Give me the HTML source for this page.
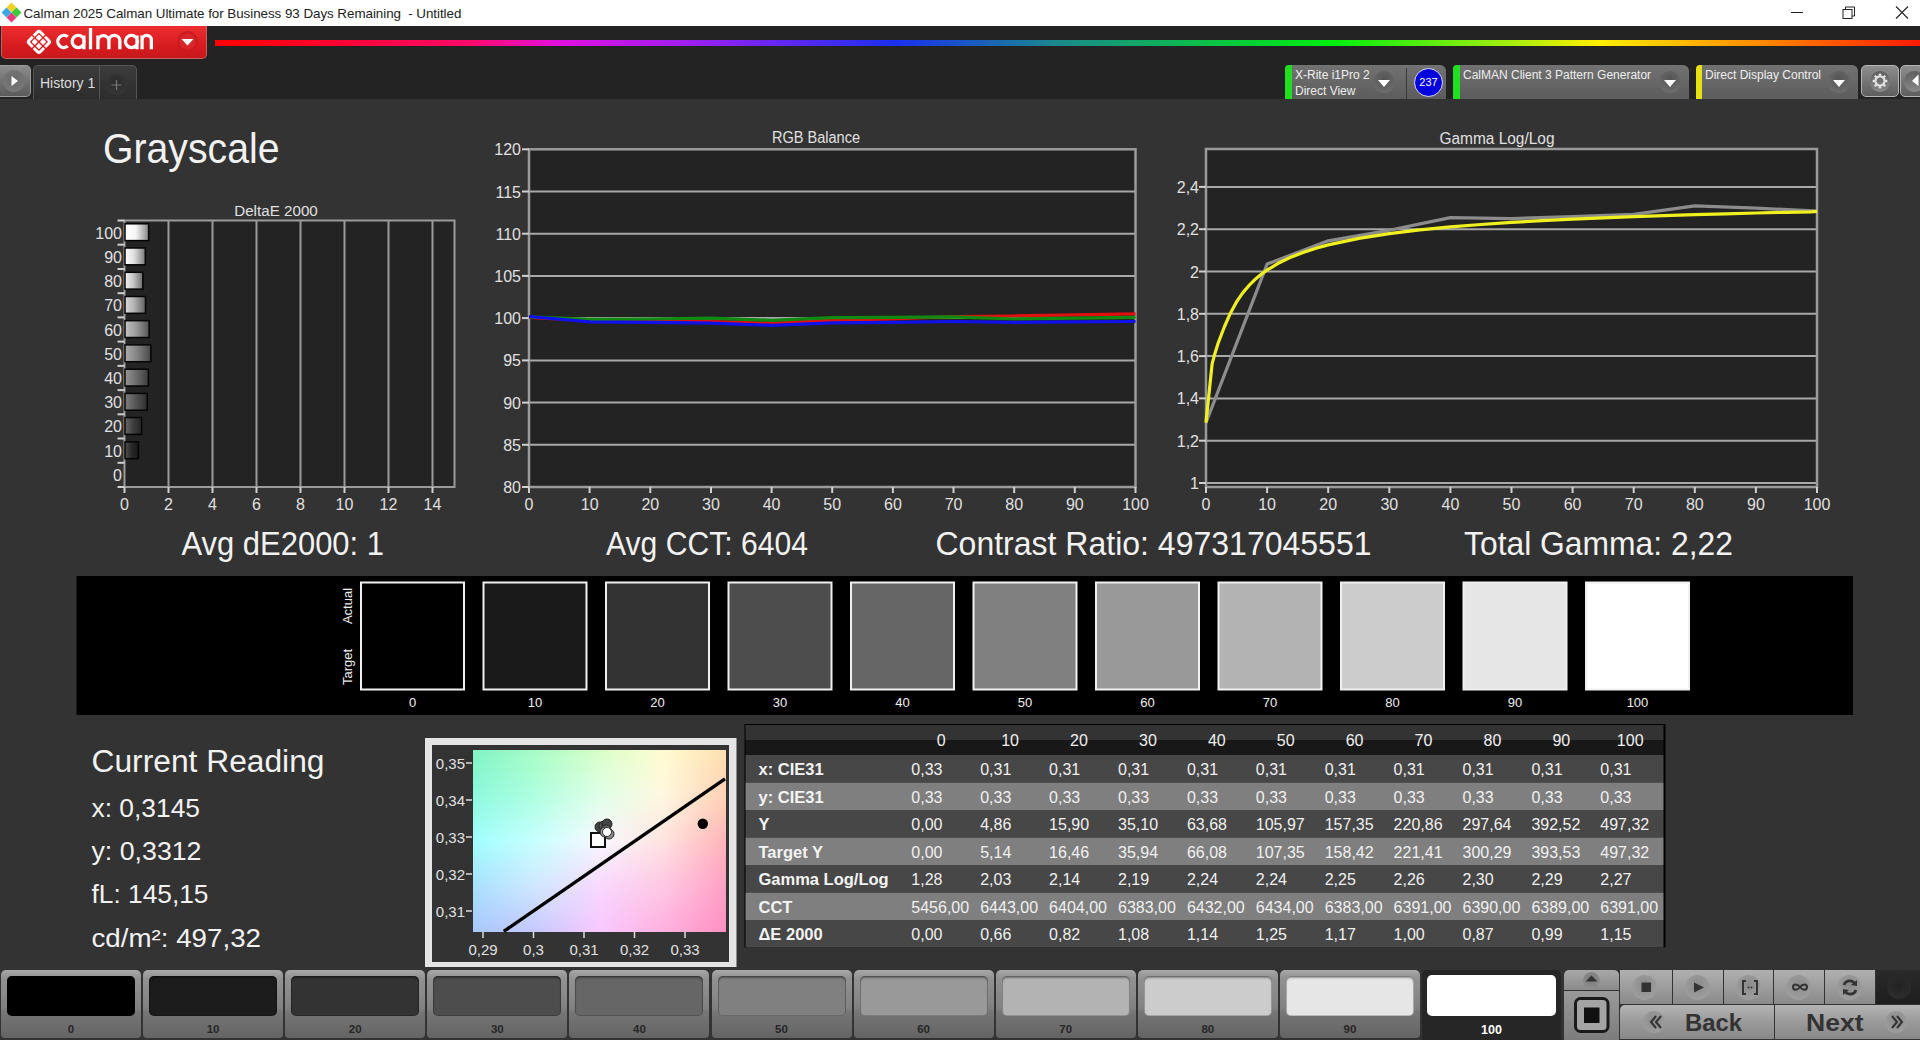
<!DOCTYPE html>
<html><head><meta charset="utf-8"><title>Calman</title>
<style>
*{margin:0;padding:0;box-sizing:border-box}
html,body{width:1920px;height:1040px;overflow:hidden;background:#333;font-family:"Liberation Sans",sans-serif}
.a{position:absolute}
#titlebar{left:0;top:0;width:1920px;height:26px;background:#fff}
#topband{left:0;top:26px;width:1920px;height:73px;background:#232323}
#content{left:0;top:99px;width:1920px;height:871px;background:#333}
#bottom{left:0;top:970px;width:1920px;height:70px;background:#333}
.ttl{left:23.5px;top:5.5px;font-size:13.4px;color:#222;white-space:nowrap;letter-spacing:-0.05px}
.logo{left:1px;top:26px;width:206px;height:33px;border-radius:0 0 5px 5px;background:linear-gradient(#ec2e30,#d81c20 60%,#c8181c);border:1px solid #c56060;border-top:none}
.rainbow{left:215px;top:40px;width:1705px;height:5.5px;background:linear-gradient(90deg,#ff0000 0px,#ff0a6a 255px,#e010e0 345px,#9a20f0 480px,#1a30f0 680px,#1a8a8a 845px,#00ee10 1115px,#a0ee10 1290px,#ffee00 1385px,#ff8a00 1545px,#ff1a00 1705px)}
.dev{top:65px;height:34px;border-radius:4px 6px 0 0;background:linear-gradient(#727272,#5c5c5c);overflow:hidden}
.dev .strip{position:absolute;left:0;top:0;bottom:0;width:7px;background:#1fe01f;border-radius:3px 0 0 0}
.dev .t{position:absolute;color:#eee;font-size:12px;white-space:nowrap}
.dd{position:absolute;width:22px;height:22px;border-radius:50%;background:radial-gradient(circle at 50% 35%,#555,#6a6a6a 70%,#777)}
.dd:after{content:"";position:absolute;left:5px;top:9px;border-left:6px solid transparent;border-right:6px solid transparent;border-top:7px solid #fff}
.btm{top:970px;height:68px;width:140px;border-radius:5px 5px 4px 4px;background:linear-gradient(#a8a8a8,#929292 12%,#828282 55%,#767676 62%,#646464)}
.btm .sw{position:absolute;left:6px;top:5.5px;width:128px;height:40.5px;border-radius:5px;box-shadow:inset 0 2px 2px rgba(0,0,0,0.35),inset 0 0 0 1px rgba(0,0,0,0.18)}
.btm .lb{position:absolute;left:0;width:140px;top:53px;text-align:center;font-size:11.5px;font-weight:bold;color:#262626}
.tb{top:970px;height:33.5px;width:50px;background:linear-gradient(#b0b0b0,#8a8a8a);border-right:1px solid #333}
.tb .c{position:absolute;left:12px;top:5px;width:25px;height:25px;border-radius:50%;background:radial-gradient(circle at 50% 40%,#8a8a8a,#9a9a9a 60%,#a4a4a4)}
</style></head><body>
<div class="a" id="titlebar"></div>
<svg class="a" style="left:1px;top:3px" width="22" height="22" viewBox="0 0 22 22">
<rect x="7" y="1" width="7" height="7" transform="rotate(45 10.5 4.5)" fill="#f5d020"/>
<rect x="2" y="6" width="7" height="7" transform="rotate(45 5.5 9.5)" fill="#3aa8e8"/>
<rect x="12" y="6" width="7" height="7" transform="rotate(45 15.5 9.5)" fill="#3cc83c"/>
<rect x="7" y="11" width="7" height="7" transform="rotate(45 10.5 14.5)" fill="#e83a7a"/>
</svg>
<div class="a ttl">Calman 2025 Calman Ultimate for Business 93 Days Remaining &nbsp;- Untitled</div>
<svg class="a" style="left:1785px;top:0" width="135" height="26">
<line x1="6" y1="12.5" x2="18" y2="12.5" stroke="#222" stroke-width="1"/>
<rect x="58" y="9.5" width="9" height="9" fill="none" stroke="#222" stroke-width="1"/>
<path d="M60.5,9.5 V7 H69.5 V16 H67" fill="none" stroke="#222" stroke-width="1"/>
<path d="M111,6.5 L123,18.5 M123,6.5 L111,18.5" stroke="#222" stroke-width="1.1"/>
</svg>
<div class="a" id="topband"></div>
<div class="a" id="content"></div>
<div class="a" id="bottom"></div>
<svg id="main" width="1920" height="1040" viewBox="0 0 1920 1040" style="position:absolute;left:0;top:0;font-family:"Liberation Sans", sans-serif"><defs><linearGradient id="cr0" x1="0" x2="1" y1="0" y2="0"><stop offset="0.0" stop-color="rgb(129,244,197)"/><stop offset="0.25" stop-color="rgb(168,252,197)"/><stop offset="0.5" stop-color="rgb(216,255,201)"/><stop offset="0.75" stop-color="rgb(255,252,209)"/><stop offset="1.0" stop-color="rgb(255,223,176)"/></linearGradient><linearGradient id="cr1" x1="0" x2="1" y1="0" y2="0"><stop offset="0.0" stop-color="rgb(130,245,199)"/><stop offset="0.25" stop-color="rgb(169,252,200)"/><stop offset="0.5" stop-color="rgb(217,255,204)"/><stop offset="0.75" stop-color="rgb(255,251,210)"/><stop offset="1.0" stop-color="rgb(255,222,177)"/></linearGradient><linearGradient id="cr2" x1="0" x2="1" y1="0" y2="0"><stop offset="0.0" stop-color="rgb(131,245,201)"/><stop offset="0.25" stop-color="rgb(170,253,202)"/><stop offset="0.5" stop-color="rgb(218,255,207)"/><stop offset="0.75" stop-color="rgb(255,251,211)"/><stop offset="1.0" stop-color="rgb(255,221,177)"/></linearGradient><linearGradient id="cr3" x1="0" x2="1" y1="0" y2="0"><stop offset="0.0" stop-color="rgb(132,245,203)"/><stop offset="0.25" stop-color="rgb(170,253,205)"/><stop offset="0.5" stop-color="rgb(218,255,210)"/><stop offset="0.75" stop-color="rgb(255,251,213)"/><stop offset="1.0" stop-color="rgb(255,219,177)"/></linearGradient><linearGradient id="cr4" x1="0" x2="1" y1="0" y2="0"><stop offset="0.0" stop-color="rgb(133,246,205)"/><stop offset="0.25" stop-color="rgb(171,253,207)"/><stop offset="0.5" stop-color="rgb(219,255,213)"/><stop offset="0.75" stop-color="rgb(255,250,214)"/><stop offset="1.0" stop-color="rgb(255,218,178)"/></linearGradient><linearGradient id="cr5" x1="0" x2="1" y1="0" y2="0"><stop offset="0.0" stop-color="rgb(134,246,207)"/><stop offset="0.25" stop-color="rgb(172,253,209)"/><stop offset="0.5" stop-color="rgb(220,255,215)"/><stop offset="0.75" stop-color="rgb(255,250,216)"/><stop offset="1.0" stop-color="rgb(255,216,178)"/></linearGradient><linearGradient id="cr6" x1="0" x2="1" y1="0" y2="0"><stop offset="0.0" stop-color="rgb(135,246,210)"/><stop offset="0.25" stop-color="rgb(173,254,212)"/><stop offset="0.5" stop-color="rgb(221,255,218)"/><stop offset="0.75" stop-color="rgb(255,250,217)"/><stop offset="1.0" stop-color="rgb(255,215,178)"/></linearGradient><linearGradient id="cr7" x1="0" x2="1" y1="0" y2="0"><stop offset="0.0" stop-color="rgb(136,247,212)"/><stop offset="0.25" stop-color="rgb(173,254,214)"/><stop offset="0.5" stop-color="rgb(221,255,221)"/><stop offset="0.75" stop-color="rgb(255,249,218)"/><stop offset="1.0" stop-color="rgb(255,214,179)"/></linearGradient><linearGradient id="cr8" x1="0" x2="1" y1="0" y2="0"><stop offset="0.0" stop-color="rgb(137,247,214)"/><stop offset="0.25" stop-color="rgb(174,254,217)"/><stop offset="0.5" stop-color="rgb(222,255,224)"/><stop offset="0.75" stop-color="rgb(255,249,220)"/><stop offset="1.0" stop-color="rgb(255,212,179)"/></linearGradient><linearGradient id="cr9" x1="0" x2="1" y1="0" y2="0"><stop offset="0.0" stop-color="rgb(138,247,216)"/><stop offset="0.25" stop-color="rgb(175,254,219)"/><stop offset="0.5" stop-color="rgb(223,255,226)"/><stop offset="0.75" stop-color="rgb(255,249,221)"/><stop offset="1.0" stop-color="rgb(255,211,179)"/></linearGradient><linearGradient id="cr10" x1="0" x2="1" y1="0" y2="0"><stop offset="0.0" stop-color="rgb(139,248,218)"/><stop offset="0.25" stop-color="rgb(175,255,222)"/><stop offset="0.5" stop-color="rgb(223,255,229)"/><stop offset="0.75" stop-color="rgb(255,248,223)"/><stop offset="1.0" stop-color="rgb(255,209,180)"/></linearGradient><linearGradient id="cr11" x1="0" x2="1" y1="0" y2="0"><stop offset="0.0" stop-color="rgb(140,248,220)"/><stop offset="0.25" stop-color="rgb(176,255,224)"/><stop offset="0.5" stop-color="rgb(224,255,232)"/><stop offset="0.75" stop-color="rgb(255,248,224)"/><stop offset="1.0" stop-color="rgb(255,208,180)"/></linearGradient><linearGradient id="cr12" x1="0" x2="1" y1="0" y2="0"><stop offset="0.0" stop-color="rgb(142,249,223)"/><stop offset="0.25" stop-color="rgb(178,255,227)"/><stop offset="0.5" stop-color="rgb(226,254,234)"/><stop offset="0.75" stop-color="rgb(255,246,224)"/><stop offset="1.0" stop-color="rgb(255,206,180)"/></linearGradient><linearGradient id="cr13" x1="0" x2="1" y1="0" y2="0"><stop offset="0.0" stop-color="rgb(143,249,226)"/><stop offset="0.25" stop-color="rgb(180,255,229)"/><stop offset="0.5" stop-color="rgb(228,254,236)"/><stop offset="0.75" stop-color="rgb(255,245,224)"/><stop offset="1.0" stop-color="rgb(255,203,181)"/></linearGradient><linearGradient id="cr14" x1="0" x2="1" y1="0" y2="0"><stop offset="0.0" stop-color="rgb(145,250,229)"/><stop offset="0.25" stop-color="rgb(182,255,232)"/><stop offset="0.5" stop-color="rgb(230,253,238)"/><stop offset="0.75" stop-color="rgb(255,243,224)"/><stop offset="1.0" stop-color="rgb(255,201,181)"/></linearGradient><linearGradient id="cr15" x1="0" x2="1" y1="0" y2="0"><stop offset="0.0" stop-color="rgb(147,250,232)"/><stop offset="0.25" stop-color="rgb(184,255,235)"/><stop offset="0.5" stop-color="rgb(232,253,240)"/><stop offset="0.75" stop-color="rgb(255,241,224)"/><stop offset="1.0" stop-color="rgb(255,198,181)"/></linearGradient><linearGradient id="cr16" x1="0" x2="1" y1="0" y2="0"><stop offset="0.0" stop-color="rgb(149,251,235)"/><stop offset="0.25" stop-color="rgb(186,255,237)"/><stop offset="0.5" stop-color="rgb(234,252,242)"/><stop offset="0.75" stop-color="rgb(255,239,224)"/><stop offset="1.0" stop-color="rgb(255,196,182)"/></linearGradient><linearGradient id="cr17" x1="0" x2="1" y1="0" y2="0"><stop offset="0.0" stop-color="rgb(150,252,238)"/><stop offset="0.25" stop-color="rgb(189,255,240)"/><stop offset="0.5" stop-color="rgb(237,251,244)"/><stop offset="0.75" stop-color="rgb(255,238,224)"/><stop offset="1.0" stop-color="rgb(255,193,182)"/></linearGradient><linearGradient id="cr18" x1="0" x2="1" y1="0" y2="0"><stop offset="0.0" stop-color="rgb(152,252,241)"/><stop offset="0.25" stop-color="rgb(191,255,243)"/><stop offset="0.5" stop-color="rgb(239,251,246)"/><stop offset="0.75" stop-color="rgb(255,236,224)"/><stop offset="1.0" stop-color="rgb(255,191,182)"/></linearGradient><linearGradient id="cr19" x1="0" x2="1" y1="0" y2="0"><stop offset="0.0" stop-color="rgb(154,253,244)"/><stop offset="0.25" stop-color="rgb(193,255,246)"/><stop offset="0.5" stop-color="rgb(241,250,248)"/><stop offset="0.75" stop-color="rgb(255,234,224)"/><stop offset="1.0" stop-color="rgb(255,189,183)"/></linearGradient><linearGradient id="cr20" x1="0" x2="1" y1="0" y2="0"><stop offset="0.0" stop-color="rgb(156,253,247)"/><stop offset="0.25" stop-color="rgb(195,255,248)"/><stop offset="0.5" stop-color="rgb(243,250,250)"/><stop offset="0.75" stop-color="rgb(255,232,224)"/><stop offset="1.0" stop-color="rgb(255,186,183)"/></linearGradient><linearGradient id="cr21" x1="0" x2="1" y1="0" y2="0"><stop offset="0.0" stop-color="rgb(157,254,250)"/><stop offset="0.25" stop-color="rgb(197,255,251)"/><stop offset="0.5" stop-color="rgb(245,249,252)"/><stop offset="0.75" stop-color="rgb(255,231,224)"/><stop offset="1.0" stop-color="rgb(255,184,183)"/></linearGradient><linearGradient id="cr22" x1="0" x2="1" y1="0" y2="0"><stop offset="0.0" stop-color="rgb(159,255,253)"/><stop offset="0.25" stop-color="rgb(199,255,254)"/><stop offset="0.5" stop-color="rgb(247,248,254)"/><stop offset="0.75" stop-color="rgb(255,229,224)"/><stop offset="1.0" stop-color="rgb(255,181,184)"/></linearGradient><linearGradient id="cr23" x1="0" x2="1" y1="0" y2="0"><stop offset="0.0" stop-color="rgb(160,254,255)"/><stop offset="0.25" stop-color="rgb(200,254,255)"/><stop offset="0.5" stop-color="rgb(248,247,255)"/><stop offset="0.75" stop-color="rgb(255,227,224)"/><stop offset="1.0" stop-color="rgb(255,179,185)"/></linearGradient><linearGradient id="cr24" x1="0" x2="1" y1="0" y2="0"><stop offset="0.0" stop-color="rgb(161,251,255)"/><stop offset="0.25" stop-color="rgb(201,252,255)"/><stop offset="0.5" stop-color="rgb(248,244,255)"/><stop offset="0.75" stop-color="rgb(255,224,225)"/><stop offset="1.0" stop-color="rgb(255,177,186)"/></linearGradient><linearGradient id="cr25" x1="0" x2="1" y1="0" y2="0"><stop offset="0.0" stop-color="rgb(162,248,255)"/><stop offset="0.25" stop-color="rgb(202,250,255)"/><stop offset="0.5" stop-color="rgb(248,241,255)"/><stop offset="0.75" stop-color="rgb(255,222,225)"/><stop offset="1.0" stop-color="rgb(255,176,187)"/></linearGradient><linearGradient id="cr26" x1="0" x2="1" y1="0" y2="0"><stop offset="0.0" stop-color="rgb(162,246,255)"/><stop offset="0.25" stop-color="rgb(202,248,255)"/><stop offset="0.5" stop-color="rgb(248,238,255)"/><stop offset="0.75" stop-color="rgb(255,219,225)"/><stop offset="1.0" stop-color="rgb(255,174,188)"/></linearGradient><linearGradient id="cr27" x1="0" x2="1" y1="0" y2="0"><stop offset="0.0" stop-color="rgb(163,243,255)"/><stop offset="0.25" stop-color="rgb(203,246,255)"/><stop offset="0.5" stop-color="rgb(248,235,255)"/><stop offset="0.75" stop-color="rgb(255,217,226)"/><stop offset="1.0" stop-color="rgb(255,172,189)"/></linearGradient><linearGradient id="cr28" x1="0" x2="1" y1="0" y2="0"><stop offset="0.0" stop-color="rgb(164,240,255)"/><stop offset="0.25" stop-color="rgb(204,244,255)"/><stop offset="0.5" stop-color="rgb(248,233,255)"/><stop offset="0.75" stop-color="rgb(255,215,226)"/><stop offset="1.0" stop-color="rgb(255,170,190)"/></linearGradient><linearGradient id="cr29" x1="0" x2="1" y1="0" y2="0"><stop offset="0.0" stop-color="rgb(165,237,255)"/><stop offset="0.25" stop-color="rgb(205,242,255)"/><stop offset="0.5" stop-color="rgb(248,230,255)"/><stop offset="0.75" stop-color="rgb(255,212,226)"/><stop offset="1.0" stop-color="rgb(255,169,191)"/></linearGradient><linearGradient id="cr30" x1="0" x2="1" y1="0" y2="0"><stop offset="0.0" stop-color="rgb(165,235,255)"/><stop offset="0.25" stop-color="rgb(205,240,255)"/><stop offset="0.5" stop-color="rgb(248,227,255)"/><stop offset="0.75" stop-color="rgb(255,210,227)"/><stop offset="1.0" stop-color="rgb(255,167,192)"/></linearGradient><linearGradient id="cr31" x1="0" x2="1" y1="0" y2="0"><stop offset="0.0" stop-color="rgb(166,232,255)"/><stop offset="0.25" stop-color="rgb(206,238,255)"/><stop offset="0.5" stop-color="rgb(248,224,255)"/><stop offset="0.75" stop-color="rgb(255,207,227)"/><stop offset="1.0" stop-color="rgb(255,165,193)"/></linearGradient><linearGradient id="cr32" x1="0" x2="1" y1="0" y2="0"><stop offset="0.0" stop-color="rgb(167,229,255)"/><stop offset="0.25" stop-color="rgb(207,236,255)"/><stop offset="0.5" stop-color="rgb(248,222,255)"/><stop offset="0.75" stop-color="rgb(255,205,227)"/><stop offset="1.0" stop-color="rgb(255,163,194)"/></linearGradient><linearGradient id="cr33" x1="0" x2="1" y1="0" y2="0"><stop offset="0.0" stop-color="rgb(167,227,255)"/><stop offset="0.25" stop-color="rgb(207,234,255)"/><stop offset="0.5" stop-color="rgb(248,219,255)"/><stop offset="0.75" stop-color="rgb(255,202,228)"/><stop offset="1.0" stop-color="rgb(255,162,195)"/></linearGradient><linearGradient id="cr34" x1="0" x2="1" y1="0" y2="0"><stop offset="0.0" stop-color="rgb(168,224,255)"/><stop offset="0.25" stop-color="rgb(208,232,255)"/><stop offset="0.5" stop-color="rgb(248,216,255)"/><stop offset="0.75" stop-color="rgb(255,200,228)"/><stop offset="1.0" stop-color="rgb(255,160,196)"/></linearGradient><linearGradient id="cr35" x1="0" x2="1" y1="0" y2="0"><stop offset="0.0" stop-color="rgb(168,222,255)"/><stop offset="0.25" stop-color="rgb(207,229,255)"/><stop offset="0.5" stop-color="rgb(248,215,255)"/><stop offset="0.75" stop-color="rgb(255,198,228)"/><stop offset="1.0" stop-color="rgb(255,159,196)"/></linearGradient><linearGradient id="cr36" x1="0" x2="1" y1="0" y2="0"><stop offset="0.0" stop-color="rgb(168,220,255)"/><stop offset="0.25" stop-color="rgb(207,226,255)"/><stop offset="0.5" stop-color="rgb(248,213,255)"/><stop offset="0.75" stop-color="rgb(255,196,227)"/><stop offset="1.0" stop-color="rgb(255,157,195)"/></linearGradient><linearGradient id="cr37" x1="0" x2="1" y1="0" y2="0"><stop offset="0.0" stop-color="rgb(168,218,255)"/><stop offset="0.25" stop-color="rgb(206,224,255)"/><stop offset="0.5" stop-color="rgb(248,212,255)"/><stop offset="0.75" stop-color="rgb(255,194,227)"/><stop offset="1.0" stop-color="rgb(255,156,195)"/></linearGradient><linearGradient id="cr38" x1="0" x2="1" y1="0" y2="0"><stop offset="0.0" stop-color="rgb(168,216,255)"/><stop offset="0.25" stop-color="rgb(205,221,255)"/><stop offset="0.5" stop-color="rgb(248,210,255)"/><stop offset="0.75" stop-color="rgb(255,192,227)"/><stop offset="1.0" stop-color="rgb(255,154,195)"/></linearGradient><linearGradient id="cr39" x1="0" x2="1" y1="0" y2="0"><stop offset="0.0" stop-color="rgb(168,214,255)"/><stop offset="0.25" stop-color="rgb(205,218,255)"/><stop offset="0.5" stop-color="rgb(248,209,255)"/><stop offset="0.75" stop-color="rgb(255,190,226)"/><stop offset="1.0" stop-color="rgb(255,153,194)"/></linearGradient><linearGradient id="cr40" x1="0" x2="1" y1="0" y2="0"><stop offset="0.0" stop-color="rgb(168,211,255)"/><stop offset="0.25" stop-color="rgb(204,215,255)"/><stop offset="0.5" stop-color="rgb(248,208,255)"/><stop offset="0.75" stop-color="rgb(255,187,226)"/><stop offset="1.0" stop-color="rgb(255,152,194)"/></linearGradient><linearGradient id="cr41" x1="0" x2="1" y1="0" y2="0"><stop offset="0.0" stop-color="rgb(168,209,255)"/><stop offset="0.25" stop-color="rgb(203,213,255)"/><stop offset="0.5" stop-color="rgb(248,206,255)"/><stop offset="0.75" stop-color="rgb(255,185,226)"/><stop offset="1.0" stop-color="rgb(255,150,194)"/></linearGradient><linearGradient id="cr42" x1="0" x2="1" y1="0" y2="0"><stop offset="0.0" stop-color="rgb(168,207,255)"/><stop offset="0.25" stop-color="rgb(202,210,255)"/><stop offset="0.5" stop-color="rgb(248,205,255)"/><stop offset="0.75" stop-color="rgb(255,183,225)"/><stop offset="1.0" stop-color="rgb(255,149,193)"/></linearGradient><linearGradient id="cr43" x1="0" x2="1" y1="0" y2="0"><stop offset="0.0" stop-color="rgb(168,205,255)"/><stop offset="0.25" stop-color="rgb(202,207,255)"/><stop offset="0.5" stop-color="rgb(248,203,255)"/><stop offset="0.75" stop-color="rgb(255,181,225)"/><stop offset="1.0" stop-color="rgb(255,147,193)"/></linearGradient><linearGradient id="cr44" x1="0" x2="1" y1="0" y2="0"><stop offset="0.0" stop-color="rgb(168,203,255)"/><stop offset="0.25" stop-color="rgb(201,204,255)"/><stop offset="0.5" stop-color="rgb(248,202,255)"/><stop offset="0.75" stop-color="rgb(255,179,225)"/><stop offset="1.0" stop-color="rgb(255,146,193)"/></linearGradient><linearGradient id="cr45" x1="0" x2="1" y1="0" y2="0"><stop offset="0.0" stop-color="rgb(168,201,255)"/><stop offset="0.25" stop-color="rgb(200,201,255)"/><stop offset="0.5" stop-color="rgb(248,201,255)"/><stop offset="0.75" stop-color="rgb(255,177,224)"/><stop offset="1.0" stop-color="rgb(255,145,192)"/></linearGradient><linearGradient id="bar100" x1="0" x2="1" y1="0" y2="0"><stop offset="0" stop-color="rgb(255,255,255)"/><stop offset="0.45" stop-color="rgb(245,245,245)"/><stop offset="1" stop-color="rgb(134,134,134)"/></linearGradient><linearGradient id="bar90" x1="0" x2="1" y1="0" y2="0"><stop offset="0" stop-color="rgb(255,255,255)"/><stop offset="0.45" stop-color="rgb(222,222,222)"/><stop offset="1" stop-color="rgb(122,122,122)"/></linearGradient><linearGradient id="bar80" x1="0" x2="1" y1="0" y2="0"><stop offset="0" stop-color="rgb(240,240,240)"/><stop offset="0.45" stop-color="rgb(200,200,200)"/><stop offset="1" stop-color="rgb(110,110,110)"/></linearGradient><linearGradient id="bar70" x1="0" x2="1" y1="0" y2="0"><stop offset="0" stop-color="rgb(217,217,217)"/><stop offset="0.45" stop-color="rgb(177,177,177)"/><stop offset="1" stop-color="rgb(97,97,97)"/></linearGradient><linearGradient id="bar60" x1="0" x2="1" y1="0" y2="0"><stop offset="0" stop-color="rgb(195,195,195)"/><stop offset="0.45" stop-color="rgb(155,155,155)"/><stop offset="1" stop-color="rgb(85,85,85)"/></linearGradient><linearGradient id="bar50" x1="0" x2="1" y1="0" y2="0"><stop offset="0" stop-color="rgb(172,172,172)"/><stop offset="0.45" stop-color="rgb(132,132,132)"/><stop offset="1" stop-color="rgb(72,72,72)"/></linearGradient><linearGradient id="bar40" x1="0" x2="1" y1="0" y2="0"><stop offset="0" stop-color="rgb(150,150,150)"/><stop offset="0.45" stop-color="rgb(110,110,110)"/><stop offset="1" stop-color="rgb(60,60,60)"/></linearGradient><linearGradient id="bar30" x1="0" x2="1" y1="0" y2="0"><stop offset="0" stop-color="rgb(127,127,127)"/><stop offset="0.45" stop-color="rgb(87,87,87)"/><stop offset="1" stop-color="rgb(47,47,47)"/></linearGradient><linearGradient id="bar20" x1="0" x2="1" y1="0" y2="0"><stop offset="0" stop-color="rgb(105,105,105)"/><stop offset="0.45" stop-color="rgb(65,65,65)"/><stop offset="1" stop-color="rgb(35,35,35)"/></linearGradient><linearGradient id="bar10" x1="0" x2="1" y1="0" y2="0"><stop offset="0" stop-color="rgb(82,82,82)"/><stop offset="0.45" stop-color="rgb(42,42,42)"/><stop offset="1" stop-color="rgb(23,23,23)"/></linearGradient><linearGradient id="bar0" x1="0" x2="1" y1="0" y2="0"><stop offset="0" stop-color="rgb(60,60,60)"/><stop offset="0.45" stop-color="rgb(20,20,20)"/><stop offset="1" stop-color="rgb(11,11,11)"/></linearGradient><linearGradient id="cieb" x1="0" y1="0" x2="1" y2="1"><stop offset="0" stop-color="#80f0c0"/><stop offset="0.5" stop-color="#f4fffc"/><stop offset="1" stop-color="#ff88bb"/></linearGradient><linearGradient id="ciec" x1="0" y1="1" x2="1" y2="0"><stop offset="0" stop-color="#a8c8ff" stop-opacity="0.9"/><stop offset="0.45" stop-color="#ffffff" stop-opacity="0"/><stop offset="1" stop-color="#ffd8a8" stop-opacity="0.9"/></linearGradient><radialGradient id="cied" cx="0.45" cy="0.5" r="0.3"><stop offset="0" stop-color="#fff" stop-opacity="0.6"/><stop offset="1" stop-color="#fff" stop-opacity="0"/></radialGradient></defs><rect x="124.5" y="220.5" width="330.0" height="266.5" fill="#232323"/>
<line x1="168.5" y1="220.5" x2="168.5" y2="487" stroke="#9a9a9a" stroke-width="2"/>
<line x1="212.5" y1="220.5" x2="212.5" y2="487" stroke="#9a9a9a" stroke-width="2"/>
<line x1="256.5" y1="220.5" x2="256.5" y2="487" stroke="#9a9a9a" stroke-width="2"/>
<line x1="300.5" y1="220.5" x2="300.5" y2="487" stroke="#9a9a9a" stroke-width="2"/>
<line x1="344.5" y1="220.5" x2="344.5" y2="487" stroke="#9a9a9a" stroke-width="2"/>
<line x1="388.5" y1="220.5" x2="388.5" y2="487" stroke="#9a9a9a" stroke-width="2"/>
<line x1="432.5" y1="220.5" x2="432.5" y2="487" stroke="#9a9a9a" stroke-width="2"/>
<rect x="124.5" y="220.5" width="330.0" height="266.5" fill="none" stroke="#9a9a9a" stroke-width="2"/>
<line x1="117.5" y1="220.5" x2="124.5" y2="220.5" stroke="#cfcfcf" stroke-width="2"/>
<line x1="117.5" y1="244.7" x2="124.5" y2="244.7" stroke="#cfcfcf" stroke-width="2"/>
<line x1="117.5" y1="269.0" x2="124.5" y2="269.0" stroke="#cfcfcf" stroke-width="2"/>
<line x1="117.5" y1="293.2" x2="124.5" y2="293.2" stroke="#cfcfcf" stroke-width="2"/>
<line x1="117.5" y1="317.4" x2="124.5" y2="317.4" stroke="#cfcfcf" stroke-width="2"/>
<line x1="117.5" y1="341.6" x2="124.5" y2="341.6" stroke="#cfcfcf" stroke-width="2"/>
<line x1="117.5" y1="365.9" x2="124.5" y2="365.9" stroke="#cfcfcf" stroke-width="2"/>
<line x1="117.5" y1="390.1" x2="124.5" y2="390.1" stroke="#cfcfcf" stroke-width="2"/>
<line x1="117.5" y1="414.3" x2="124.5" y2="414.3" stroke="#cfcfcf" stroke-width="2"/>
<line x1="117.5" y1="438.5" x2="124.5" y2="438.5" stroke="#cfcfcf" stroke-width="2"/>
<line x1="117.5" y1="462.8" x2="124.5" y2="462.8" stroke="#cfcfcf" stroke-width="2"/>
<line x1="117.5" y1="487.0" x2="124.5" y2="487.0" stroke="#cfcfcf" stroke-width="2"/>
<line x1="124.5" y1="487" x2="124.5" y2="493" stroke="#cfcfcf" stroke-width="2"/>
<text x="124.5" y="510" font-size="16" fill="#e0e0e0" text-anchor="middle" font-weight="normal" >0</text>
<line x1="168.5" y1="487" x2="168.5" y2="493" stroke="#cfcfcf" stroke-width="2"/>
<text x="168.5" y="510" font-size="16" fill="#e0e0e0" text-anchor="middle" font-weight="normal" >2</text>
<line x1="212.5" y1="487" x2="212.5" y2="493" stroke="#cfcfcf" stroke-width="2"/>
<text x="212.5" y="510" font-size="16" fill="#e0e0e0" text-anchor="middle" font-weight="normal" >4</text>
<line x1="256.5" y1="487" x2="256.5" y2="493" stroke="#cfcfcf" stroke-width="2"/>
<text x="256.5" y="510" font-size="16" fill="#e0e0e0" text-anchor="middle" font-weight="normal" >6</text>
<line x1="300.5" y1="487" x2="300.5" y2="493" stroke="#cfcfcf" stroke-width="2"/>
<text x="300.5" y="510" font-size="16" fill="#e0e0e0" text-anchor="middle" font-weight="normal" >8</text>
<line x1="344.5" y1="487" x2="344.5" y2="493" stroke="#cfcfcf" stroke-width="2"/>
<text x="344.5" y="510" font-size="16" fill="#e0e0e0" text-anchor="middle" font-weight="normal" >10</text>
<line x1="388.5" y1="487" x2="388.5" y2="493" stroke="#cfcfcf" stroke-width="2"/>
<text x="388.5" y="510" font-size="16" fill="#e0e0e0" text-anchor="middle" font-weight="normal" >12</text>
<line x1="432.5" y1="487" x2="432.5" y2="493" stroke="#cfcfcf" stroke-width="2"/>
<text x="432.5" y="510" font-size="16" fill="#e0e0e0" text-anchor="middle" font-weight="normal" >14</text>
<text x="122" y="238.61363636363637" font-size="16" fill="#e0e0e0" text-anchor="end" font-weight="normal" >100</text>
<rect x="125.0" y="223.8" width="23.6" height="16.8" fill="url(#bar100)" stroke="#050505" stroke-width="1.5"/>
<text x="122" y="262.8409090909091" font-size="16" fill="#e0e0e0" text-anchor="end" font-weight="normal" >90</text>
<rect x="125.0" y="248.0" width="20.3" height="16.8" fill="url(#bar90)" stroke="#050505" stroke-width="1.5"/>
<text x="122" y="287.0681818181818" font-size="16" fill="#e0e0e0" text-anchor="end" font-weight="normal" >80</text>
<rect x="125.0" y="272.3" width="17.8" height="16.8" fill="url(#bar80)" stroke="#050505" stroke-width="1.5"/>
<text x="122" y="311.29545454545456" font-size="16" fill="#e0e0e0" text-anchor="end" font-weight="normal" >70</text>
<rect x="125.0" y="296.5" width="20.5" height="16.8" fill="url(#bar70)" stroke="#050505" stroke-width="1.5"/>
<text x="122" y="335.52272727272725" font-size="16" fill="#e0e0e0" text-anchor="end" font-weight="normal" >60</text>
<rect x="125.0" y="320.7" width="24.1" height="16.8" fill="url(#bar60)" stroke="#050505" stroke-width="1.5"/>
<text x="122" y="359.75" font-size="16" fill="#e0e0e0" text-anchor="end" font-weight="normal" >50</text>
<rect x="125.0" y="344.9" width="25.8" height="16.8" fill="url(#bar50)" stroke="#050505" stroke-width="1.5"/>
<text x="122" y="383.97727272727275" font-size="16" fill="#e0e0e0" text-anchor="end" font-weight="normal" >40</text>
<rect x="125.0" y="369.2" width="23.4" height="16.8" fill="url(#bar40)" stroke="#050505" stroke-width="1.5"/>
<text x="122" y="408.20454545454544" font-size="16" fill="#e0e0e0" text-anchor="end" font-weight="normal" >30</text>
<rect x="125.0" y="393.4" width="22.2" height="16.8" fill="url(#bar30)" stroke="#050505" stroke-width="1.5"/>
<text x="122" y="432.4318181818182" font-size="16" fill="#e0e0e0" text-anchor="end" font-weight="normal" >20</text>
<rect x="125.0" y="417.6" width="16.7" height="16.8" fill="url(#bar20)" stroke="#050505" stroke-width="1.5"/>
<text x="122" y="456.6590909090909" font-size="16" fill="#e0e0e0" text-anchor="end" font-weight="normal" >10</text>
<rect x="125.0" y="441.9" width="13.4" height="16.8" fill="url(#bar10)" stroke="#050505" stroke-width="1.5"/>
<text x="122" y="480.8863636363636" font-size="16" fill="#e0e0e0" text-anchor="end" font-weight="normal" >0</text>
<text x="276" y="215.6" font-size="15.5" fill="#e0e0e0" text-anchor="middle" font-weight="normal" textLength="83.6" lengthAdjust="spacingAndGlyphs" >DeltaE 2000</text>
<rect x="529" y="149.3" width="606.5" height="337.7" fill="#232323"/>
<line x1="529" y1="191.5" x2="1135.5" y2="191.5" stroke="#a8a8a8" stroke-width="2"/>
<line x1="529" y1="233.7" x2="1135.5" y2="233.7" stroke="#a8a8a8" stroke-width="2"/>
<line x1="529" y1="275.9" x2="1135.5" y2="275.9" stroke="#a8a8a8" stroke-width="2"/>
<line x1="529" y1="318.1" x2="1135.5" y2="318.1" stroke="#a8a8a8" stroke-width="2"/>
<line x1="529" y1="360.4" x2="1135.5" y2="360.4" stroke="#a8a8a8" stroke-width="2"/>
<line x1="529" y1="402.6" x2="1135.5" y2="402.6" stroke="#a8a8a8" stroke-width="2"/>
<line x1="529" y1="444.8" x2="1135.5" y2="444.8" stroke="#a8a8a8" stroke-width="2"/>
<rect x="529" y="149.3" width="606.5" height="337.7" fill="none" stroke="#9a9a9a" stroke-width="2.5"/>
<line x1="522" y1="149.3" x2="529" y2="149.3" stroke="#d0d0d0" stroke-width="2"/>
<text x="521" y="155.3" font-size="16" fill="#e0e0e0" text-anchor="end" font-weight="normal" >120</text>
<line x1="522" y1="191.5" x2="529" y2="191.5" stroke="#d0d0d0" stroke-width="2"/>
<text x="521" y="197.51250000000002" font-size="16" fill="#e0e0e0" text-anchor="end" font-weight="normal" >115</text>
<line x1="522" y1="233.7" x2="529" y2="233.7" stroke="#d0d0d0" stroke-width="2"/>
<text x="521" y="239.72500000000002" font-size="16" fill="#e0e0e0" text-anchor="end" font-weight="normal" >110</text>
<line x1="522" y1="275.9" x2="529" y2="275.9" stroke="#d0d0d0" stroke-width="2"/>
<text x="521" y="281.9375" font-size="16" fill="#e0e0e0" text-anchor="end" font-weight="normal" >105</text>
<line x1="522" y1="318.1" x2="529" y2="318.1" stroke="#d0d0d0" stroke-width="2"/>
<text x="521" y="324.15" font-size="16" fill="#e0e0e0" text-anchor="end" font-weight="normal" >100</text>
<line x1="522" y1="360.4" x2="529" y2="360.4" stroke="#d0d0d0" stroke-width="2"/>
<text x="521" y="366.3625" font-size="16" fill="#e0e0e0" text-anchor="end" font-weight="normal" >95</text>
<line x1="522" y1="402.6" x2="529" y2="402.6" stroke="#d0d0d0" stroke-width="2"/>
<text x="521" y="408.575" font-size="16" fill="#e0e0e0" text-anchor="end" font-weight="normal" >90</text>
<line x1="522" y1="444.8" x2="529" y2="444.8" stroke="#d0d0d0" stroke-width="2"/>
<text x="521" y="450.7875" font-size="16" fill="#e0e0e0" text-anchor="end" font-weight="normal" >85</text>
<line x1="522" y1="487.0" x2="529" y2="487.0" stroke="#d0d0d0" stroke-width="2"/>
<text x="521" y="493.0" font-size="16" fill="#e0e0e0" text-anchor="end" font-weight="normal" >80</text>
<line x1="529.0" y1="487" x2="529.0" y2="493" stroke="#d0d0d0" stroke-width="2"/>
<text x="529.0" y="510" font-size="16" fill="#e0e0e0" text-anchor="middle" font-weight="normal" >0</text>
<line x1="589.6" y1="487" x2="589.6" y2="493" stroke="#d0d0d0" stroke-width="2"/>
<text x="589.65" y="510" font-size="16" fill="#e0e0e0" text-anchor="middle" font-weight="normal" >10</text>
<line x1="650.3" y1="487" x2="650.3" y2="493" stroke="#d0d0d0" stroke-width="2"/>
<text x="650.3" y="510" font-size="16" fill="#e0e0e0" text-anchor="middle" font-weight="normal" >20</text>
<line x1="711.0" y1="487" x2="711.0" y2="493" stroke="#d0d0d0" stroke-width="2"/>
<text x="710.95" y="510" font-size="16" fill="#e0e0e0" text-anchor="middle" font-weight="normal" >30</text>
<line x1="771.6" y1="487" x2="771.6" y2="493" stroke="#d0d0d0" stroke-width="2"/>
<text x="771.6" y="510" font-size="16" fill="#e0e0e0" text-anchor="middle" font-weight="normal" >40</text>
<line x1="832.2" y1="487" x2="832.2" y2="493" stroke="#d0d0d0" stroke-width="2"/>
<text x="832.25" y="510" font-size="16" fill="#e0e0e0" text-anchor="middle" font-weight="normal" >50</text>
<line x1="892.9" y1="487" x2="892.9" y2="493" stroke="#d0d0d0" stroke-width="2"/>
<text x="892.9" y="510" font-size="16" fill="#e0e0e0" text-anchor="middle" font-weight="normal" >60</text>
<line x1="953.5" y1="487" x2="953.5" y2="493" stroke="#d0d0d0" stroke-width="2"/>
<text x="953.55" y="510" font-size="16" fill="#e0e0e0" text-anchor="middle" font-weight="normal" >70</text>
<line x1="1014.2" y1="487" x2="1014.2" y2="493" stroke="#d0d0d0" stroke-width="2"/>
<text x="1014.2" y="510" font-size="16" fill="#e0e0e0" text-anchor="middle" font-weight="normal" >80</text>
<line x1="1074.8" y1="487" x2="1074.8" y2="493" stroke="#d0d0d0" stroke-width="2"/>
<text x="1074.85" y="510" font-size="16" fill="#e0e0e0" text-anchor="middle" font-weight="normal" >90</text>
<line x1="1135.5" y1="487" x2="1135.5" y2="493" stroke="#d0d0d0" stroke-width="2"/>
<text x="1135.5" y="510" font-size="16" fill="#e0e0e0" text-anchor="middle" font-weight="normal" >100</text>
<text x="816" y="143" font-size="16" fill="#e0e0e0" text-anchor="middle" font-weight="normal" textLength="88" lengthAdjust="spacingAndGlyphs" >RGB Balance</text>
<polyline points="529.0,317.3 589.6,320.7 650.3,320.7 711.0,321.5 771.6,323.2 832.2,320.3 892.9,319.0 953.5,316.5 1014.2,316.0 1074.8,314.8 1135.5,313.9" fill="none" stroke="#e01010" stroke-width="3.2" stroke-linejoin="round"/>
<polyline points="529.0,316.9 589.6,319.4 650.3,319.0 711.0,318.1 771.6,320.3 832.2,317.7 892.9,317.3 953.5,316.9 1014.2,319.0 1074.8,318.1 1135.5,317.3" fill="none" stroke="#108a10" stroke-width="3.2" stroke-linejoin="round"/>
<polyline points="529.0,316.5 589.6,321.9 650.3,322.4 711.0,323.2 771.6,325.3 832.2,322.8 892.9,322.4 953.5,321.5 1014.2,322.4 1074.8,321.9 1135.5,321.5" fill="none" stroke="#1010e8" stroke-width="3.2" stroke-linejoin="round"/>
<rect x="1206" y="149" width="611" height="338" fill="#232323"/>
<line x1="1206" y1="440.7" x2="1817" y2="440.7" stroke="#a8a8a8" stroke-width="2"/>
<line x1="1206" y1="398.4" x2="1817" y2="398.4" stroke="#a8a8a8" stroke-width="2"/>
<line x1="1206" y1="356.1" x2="1817" y2="356.1" stroke="#a8a8a8" stroke-width="2"/>
<line x1="1206" y1="313.8" x2="1817" y2="313.8" stroke="#a8a8a8" stroke-width="2"/>
<line x1="1206" y1="271.5" x2="1817" y2="271.5" stroke="#a8a8a8" stroke-width="2"/>
<line x1="1206" y1="229.2" x2="1817" y2="229.2" stroke="#a8a8a8" stroke-width="2"/>
<line x1="1206" y1="186.9" x2="1817" y2="186.9" stroke="#a8a8a8" stroke-width="2"/>
<line x1="1206" y1="483" x2="1817" y2="483" stroke="#a8a8a8" stroke-width="2"/>
<rect x="1206" y="149" width="611" height="338" fill="none" stroke="#9a9a9a" stroke-width="2.5"/>
<line x1="1199" y1="483.0" x2="1206" y2="483.0" stroke="#d0d0d0" stroke-width="2"/>
<text x="1199" y="489.0" font-size="16" fill="#e0e0e0" text-anchor="end" font-weight="normal" >1</text>
<line x1="1199" y1="440.7" x2="1206" y2="440.7" stroke="#d0d0d0" stroke-width="2"/>
<text x="1199" y="446.7" font-size="16" fill="#e0e0e0" text-anchor="end" font-weight="normal" >1,2</text>
<line x1="1199" y1="398.4" x2="1206" y2="398.4" stroke="#d0d0d0" stroke-width="2"/>
<text x="1199" y="404.40000000000003" font-size="16" fill="#e0e0e0" text-anchor="end" font-weight="normal" >1,4</text>
<line x1="1199" y1="356.1" x2="1206" y2="356.1" stroke="#d0d0d0" stroke-width="2"/>
<text x="1199" y="362.09999999999997" font-size="16" fill="#e0e0e0" text-anchor="end" font-weight="normal" >1,6</text>
<line x1="1199" y1="313.8" x2="1206" y2="313.8" stroke="#d0d0d0" stroke-width="2"/>
<text x="1199" y="319.79999999999995" font-size="16" fill="#e0e0e0" text-anchor="end" font-weight="normal" >1,8</text>
<line x1="1199" y1="271.5" x2="1206" y2="271.5" stroke="#d0d0d0" stroke-width="2"/>
<text x="1199" y="277.5" font-size="16" fill="#e0e0e0" text-anchor="end" font-weight="normal" >2</text>
<line x1="1199" y1="229.2" x2="1206" y2="229.2" stroke="#d0d0d0" stroke-width="2"/>
<text x="1199" y="235.19999999999996" font-size="16" fill="#e0e0e0" text-anchor="end" font-weight="normal" >2,2</text>
<line x1="1199" y1="186.9" x2="1206" y2="186.9" stroke="#d0d0d0" stroke-width="2"/>
<text x="1199" y="192.90000000000003" font-size="16" fill="#e0e0e0" text-anchor="end" font-weight="normal" >2,4</text>
<line x1="1206.0" y1="487" x2="1206.0" y2="493" stroke="#d0d0d0" stroke-width="2"/>
<text x="1206.0" y="510" font-size="16" fill="#e0e0e0" text-anchor="middle" font-weight="normal" >0</text>
<line x1="1267.1" y1="487" x2="1267.1" y2="493" stroke="#d0d0d0" stroke-width="2"/>
<text x="1267.1" y="510" font-size="16" fill="#e0e0e0" text-anchor="middle" font-weight="normal" >10</text>
<line x1="1328.2" y1="487" x2="1328.2" y2="493" stroke="#d0d0d0" stroke-width="2"/>
<text x="1328.2" y="510" font-size="16" fill="#e0e0e0" text-anchor="middle" font-weight="normal" >20</text>
<line x1="1389.3" y1="487" x2="1389.3" y2="493" stroke="#d0d0d0" stroke-width="2"/>
<text x="1389.3" y="510" font-size="16" fill="#e0e0e0" text-anchor="middle" font-weight="normal" >30</text>
<line x1="1450.4" y1="487" x2="1450.4" y2="493" stroke="#d0d0d0" stroke-width="2"/>
<text x="1450.4" y="510" font-size="16" fill="#e0e0e0" text-anchor="middle" font-weight="normal" >40</text>
<line x1="1511.5" y1="487" x2="1511.5" y2="493" stroke="#d0d0d0" stroke-width="2"/>
<text x="1511.5" y="510" font-size="16" fill="#e0e0e0" text-anchor="middle" font-weight="normal" >50</text>
<line x1="1572.6" y1="487" x2="1572.6" y2="493" stroke="#d0d0d0" stroke-width="2"/>
<text x="1572.6" y="510" font-size="16" fill="#e0e0e0" text-anchor="middle" font-weight="normal" >60</text>
<line x1="1633.7" y1="487" x2="1633.7" y2="493" stroke="#d0d0d0" stroke-width="2"/>
<text x="1633.7" y="510" font-size="16" fill="#e0e0e0" text-anchor="middle" font-weight="normal" >70</text>
<line x1="1694.8" y1="487" x2="1694.8" y2="493" stroke="#d0d0d0" stroke-width="2"/>
<text x="1694.8" y="510" font-size="16" fill="#e0e0e0" text-anchor="middle" font-weight="normal" >80</text>
<line x1="1755.9" y1="487" x2="1755.9" y2="493" stroke="#d0d0d0" stroke-width="2"/>
<text x="1755.9" y="510" font-size="16" fill="#e0e0e0" text-anchor="middle" font-weight="normal" >90</text>
<line x1="1817.0" y1="487" x2="1817.0" y2="493" stroke="#d0d0d0" stroke-width="2"/>
<text x="1817.0" y="510" font-size="16" fill="#e0e0e0" text-anchor="middle" font-weight="normal" >100</text>
<text x="1497" y="143.5" font-size="16" fill="#e0e0e0" text-anchor="middle" font-weight="normal" textLength="115" lengthAdjust="spacingAndGlyphs" >Gamma Log/Log</text>
<polyline points="1206.0,422.7 1267.1,264.1 1328.2,240.8 1389.3,230.3 1450.4,217.6 1511.5,218.6 1572.6,216.5 1633.7,214.4 1694.8,205.9 1755.9,208.1 1817.0,211.2" fill="none" stroke="#8c8c8c" stroke-width="3.2" stroke-linejoin="round"/>
<polyline points="1206.0,422.7 1212.1,363.8 1215.2,352.4 1218.2,343.0 1224.3,327.0 1230.4,313.2 1236.5,301.9 1242.7,292.9 1248.8,285.7 1254.9,279.6 1261.0,274.5 1267.1,270.0 1279.3,262.7 1291.5,256.9 1303.8,252.2 1316.0,248.3 1328.2,244.9 1358.8,238.4 1389.3,233.6 1419.8,229.9 1450.4,226.9 1481.0,224.5 1511.5,222.4 1542.0,220.7 1572.6,219.2 1603.2,217.8 1633.7,216.7 1664.2,215.6 1694.8,214.7 1725.3,213.8 1755.9,213.0 1786.5,212.3 1810.9,211.8 1817.0,211.4" fill="none" stroke="#f0f020" stroke-width="3.2" stroke-linejoin="round"/>
<text x="181.5" y="555.2" font-size="33" fill="#f2f2f2" text-anchor="start" font-weight="normal" textLength="202.5" lengthAdjust="spacingAndGlyphs" >Avg dE2000: 1</text>
<text x="606" y="555.2" font-size="33" fill="#f2f2f2" text-anchor="start" font-weight="normal" textLength="202" lengthAdjust="spacingAndGlyphs" >Avg CCT: 6404</text>
<text x="935.5" y="555.2" font-size="33" fill="#f2f2f2" text-anchor="start" font-weight="normal" textLength="436" lengthAdjust="spacingAndGlyphs" >Contrast Ratio: 497317045551</text>
<text x="1464" y="555.2" font-size="33" fill="#f2f2f2" text-anchor="start" font-weight="normal" textLength="269" lengthAdjust="spacingAndGlyphs" >Total Gamma: 2,22</text>
<text x="103" y="162.5" font-size="42" fill="#f2f2f2" text-anchor="start" font-weight="normal" textLength="176.5" lengthAdjust="spacingAndGlyphs" >Grayscale</text>
<rect x="76.5" y="576" width="1776.5" height="139" fill="#000"/>
<rect x="361.0" y="582.5" width="103" height="107" fill="rgb(0,0,0)" stroke="#f0f0f0" stroke-width="2"/>
<text x="412.5" y="707" font-size="13" fill="#f0f0f0" text-anchor="middle" font-weight="normal" >0</text>
<rect x="483.5" y="582.5" width="103" height="107" fill="rgb(26,26,26)" stroke="#f0f0f0" stroke-width="2"/>
<text x="535.0" y="707" font-size="13" fill="#f0f0f0" text-anchor="middle" font-weight="normal" >10</text>
<rect x="606.0" y="582.5" width="103" height="107" fill="rgb(51,51,51)" stroke="#f0f0f0" stroke-width="2"/>
<text x="657.5" y="707" font-size="13" fill="#f0f0f0" text-anchor="middle" font-weight="normal" >20</text>
<rect x="728.5" y="582.5" width="103" height="107" fill="rgb(77,77,77)" stroke="#f0f0f0" stroke-width="2"/>
<text x="780.0" y="707" font-size="13" fill="#f0f0f0" text-anchor="middle" font-weight="normal" >30</text>
<rect x="851.0" y="582.5" width="103" height="107" fill="rgb(102,102,102)" stroke="#f0f0f0" stroke-width="2"/>
<text x="902.5" y="707" font-size="13" fill="#f0f0f0" text-anchor="middle" font-weight="normal" >40</text>
<rect x="973.5" y="582.5" width="103" height="107" fill="rgb(128,128,128)" stroke="#f0f0f0" stroke-width="2"/>
<text x="1025.0" y="707" font-size="13" fill="#f0f0f0" text-anchor="middle" font-weight="normal" >50</text>
<rect x="1096.0" y="582.5" width="103" height="107" fill="rgb(153,153,153)" stroke="#f0f0f0" stroke-width="2"/>
<text x="1147.5" y="707" font-size="13" fill="#f0f0f0" text-anchor="middle" font-weight="normal" >60</text>
<rect x="1218.5" y="582.5" width="103" height="107" fill="rgb(179,179,179)" stroke="#f0f0f0" stroke-width="2"/>
<text x="1270.0" y="707" font-size="13" fill="#f0f0f0" text-anchor="middle" font-weight="normal" >70</text>
<rect x="1341.0" y="582.5" width="103" height="107" fill="rgb(204,204,204)" stroke="#f0f0f0" stroke-width="2"/>
<text x="1392.5" y="707" font-size="13" fill="#f0f0f0" text-anchor="middle" font-weight="normal" >80</text>
<rect x="1463.5" y="582.5" width="103" height="107" fill="rgb(230,230,230)" stroke="#f0f0f0" stroke-width="2"/>
<text x="1515.0" y="707" font-size="13" fill="#f0f0f0" text-anchor="middle" font-weight="normal" >90</text>
<rect x="1586.0" y="582.5" width="103" height="107" fill="rgb(255,255,255)" stroke="#f0f0f0" stroke-width="2"/>
<text x="1637.5" y="707" font-size="13" fill="#f0f0f0" text-anchor="middle" font-weight="normal" >100</text>
<text transform="translate(351.5,606) rotate(-90)" font-size="13" fill="#f0f0f0" text-anchor="middle">Actual</text>
<text transform="translate(351.5,667) rotate(-90)" font-size="13" fill="#f0f0f0" text-anchor="middle">Target</text>
<text x="91.5" y="771.5" font-size="31" fill="#f2f2f2" text-anchor="start" font-weight="normal" textLength="233" lengthAdjust="spacingAndGlyphs" >Current Reading</text>
<text x="91.5" y="816.5" font-size="26" fill="#f2f2f2" text-anchor="start" font-weight="normal" textLength="108.5" lengthAdjust="spacingAndGlyphs" >x: 0,3145</text>
<text x="91.5" y="860.4" font-size="26" fill="#f2f2f2" text-anchor="start" font-weight="normal" textLength="110" lengthAdjust="spacingAndGlyphs" >y: 0,3312</text>
<text x="91.5" y="903" font-size="26" fill="#f2f2f2" text-anchor="start" font-weight="normal" textLength="117" lengthAdjust="spacingAndGlyphs" >fL: 145,15</text>
<text x="91.5" y="946.9" font-size="26" fill="#f2f2f2" text-anchor="start" font-weight="normal" textLength="169.5" lengthAdjust="spacingAndGlyphs" >cd/m²: 497,32</text>
<rect x="425" y="738" width="311.5" height="229" fill="#e4e4e4"/>
<rect x="432" y="745" width="297" height="217" fill="#333"/>
<rect x="473" y="750" width="253" height="3" fill="url(#cr0)" shape-rendering="crispEdges"/>
<rect x="473" y="753" width="253" height="4" fill="url(#cr1)" shape-rendering="crispEdges"/>
<rect x="473" y="757" width="253" height="4" fill="url(#cr2)" shape-rendering="crispEdges"/>
<rect x="473" y="761" width="253" height="4" fill="url(#cr3)" shape-rendering="crispEdges"/>
<rect x="473" y="765" width="253" height="4" fill="url(#cr4)" shape-rendering="crispEdges"/>
<rect x="473" y="769" width="253" height="4" fill="url(#cr5)" shape-rendering="crispEdges"/>
<rect x="473" y="773" width="253" height="4" fill="url(#cr6)" shape-rendering="crispEdges"/>
<rect x="473" y="777" width="253" height="4" fill="url(#cr7)" shape-rendering="crispEdges"/>
<rect x="473" y="781" width="253" height="4" fill="url(#cr8)" shape-rendering="crispEdges"/>
<rect x="473" y="785" width="253" height="4" fill="url(#cr9)" shape-rendering="crispEdges"/>
<rect x="473" y="789" width="253" height="4" fill="url(#cr10)" shape-rendering="crispEdges"/>
<rect x="473" y="793" width="253" height="4" fill="url(#cr11)" shape-rendering="crispEdges"/>
<rect x="473" y="797" width="253" height="4" fill="url(#cr12)" shape-rendering="crispEdges"/>
<rect x="473" y="801" width="253" height="4" fill="url(#cr13)" shape-rendering="crispEdges"/>
<rect x="473" y="805" width="253" height="4" fill="url(#cr14)" shape-rendering="crispEdges"/>
<rect x="473" y="809" width="253" height="4" fill="url(#cr15)" shape-rendering="crispEdges"/>
<rect x="473" y="813" width="253" height="4" fill="url(#cr16)" shape-rendering="crispEdges"/>
<rect x="473" y="817" width="253" height="4" fill="url(#cr17)" shape-rendering="crispEdges"/>
<rect x="473" y="821" width="253" height="4" fill="url(#cr18)" shape-rendering="crispEdges"/>
<rect x="473" y="825" width="253" height="4" fill="url(#cr19)" shape-rendering="crispEdges"/>
<rect x="473" y="829" width="253" height="4" fill="url(#cr20)" shape-rendering="crispEdges"/>
<rect x="473" y="833" width="253" height="4" fill="url(#cr21)" shape-rendering="crispEdges"/>
<rect x="473" y="837" width="253" height="3" fill="url(#cr22)" shape-rendering="crispEdges"/>
<rect x="473" y="840" width="253" height="4" fill="url(#cr23)" shape-rendering="crispEdges"/>
<rect x="473" y="844" width="253" height="4" fill="url(#cr24)" shape-rendering="crispEdges"/>
<rect x="473" y="848" width="253" height="4" fill="url(#cr25)" shape-rendering="crispEdges"/>
<rect x="473" y="852" width="253" height="4" fill="url(#cr26)" shape-rendering="crispEdges"/>
<rect x="473" y="856" width="253" height="4" fill="url(#cr27)" shape-rendering="crispEdges"/>
<rect x="473" y="860" width="253" height="4" fill="url(#cr28)" shape-rendering="crispEdges"/>
<rect x="473" y="864" width="253" height="4" fill="url(#cr29)" shape-rendering="crispEdges"/>
<rect x="473" y="868" width="253" height="4" fill="url(#cr30)" shape-rendering="crispEdges"/>
<rect x="473" y="872" width="253" height="4" fill="url(#cr31)" shape-rendering="crispEdges"/>
<rect x="473" y="876" width="253" height="4" fill="url(#cr32)" shape-rendering="crispEdges"/>
<rect x="473" y="880" width="253" height="4" fill="url(#cr33)" shape-rendering="crispEdges"/>
<rect x="473" y="884" width="253" height="4" fill="url(#cr34)" shape-rendering="crispEdges"/>
<rect x="473" y="888" width="253" height="4" fill="url(#cr35)" shape-rendering="crispEdges"/>
<rect x="473" y="892" width="253" height="4" fill="url(#cr36)" shape-rendering="crispEdges"/>
<rect x="473" y="896" width="253" height="4" fill="url(#cr37)" shape-rendering="crispEdges"/>
<rect x="473" y="900" width="253" height="4" fill="url(#cr38)" shape-rendering="crispEdges"/>
<rect x="473" y="904" width="253" height="4" fill="url(#cr39)" shape-rendering="crispEdges"/>
<rect x="473" y="908" width="253" height="4" fill="url(#cr40)" shape-rendering="crispEdges"/>
<rect x="473" y="912" width="253" height="4" fill="url(#cr41)" shape-rendering="crispEdges"/>
<rect x="473" y="916" width="253" height="4" fill="url(#cr42)" shape-rendering="crispEdges"/>
<rect x="473" y="920" width="253" height="4" fill="url(#cr43)" shape-rendering="crispEdges"/>
<rect x="473" y="924" width="253" height="4" fill="url(#cr44)" shape-rendering="crispEdges"/>
<rect x="473" y="928" width="253" height="4" fill="url(#cr45)" shape-rendering="crispEdges"/>
<line x1="466" y1="763" x2="472" y2="763" stroke="#ddd" stroke-width="1.5"/>
<text x="465" y="768.5" font-size="15" fill="#e0e0e0" text-anchor="end" font-weight="normal" >0,35</text>
<line x1="466" y1="800" x2="472" y2="800" stroke="#ddd" stroke-width="1.5"/>
<text x="465" y="805.5" font-size="15" fill="#e0e0e0" text-anchor="end" font-weight="normal" >0,34</text>
<line x1="466" y1="837" x2="472" y2="837" stroke="#ddd" stroke-width="1.5"/>
<text x="465" y="842.5" font-size="15" fill="#e0e0e0" text-anchor="end" font-weight="normal" >0,33</text>
<line x1="466" y1="874" x2="472" y2="874" stroke="#ddd" stroke-width="1.5"/>
<text x="465" y="879.5" font-size="15" fill="#e0e0e0" text-anchor="end" font-weight="normal" >0,32</text>
<line x1="466" y1="911" x2="472" y2="911" stroke="#ddd" stroke-width="1.5"/>
<text x="465" y="916.5" font-size="15" fill="#e0e0e0" text-anchor="end" font-weight="normal" >0,31</text>
<line x1="483.0" y1="932" x2="483.0" y2="938" stroke="#ddd" stroke-width="1.5"/>
<text x="483.0" y="955" font-size="15" fill="#e0e0e0" text-anchor="middle" font-weight="normal" >0,29</text>
<line x1="533.5" y1="932" x2="533.5" y2="938" stroke="#ddd" stroke-width="1.5"/>
<text x="533.5" y="955" font-size="15" fill="#e0e0e0" text-anchor="middle" font-weight="normal" >0,3</text>
<line x1="584.0" y1="932" x2="584.0" y2="938" stroke="#ddd" stroke-width="1.5"/>
<text x="584.0" y="955" font-size="15" fill="#e0e0e0" text-anchor="middle" font-weight="normal" >0,31</text>
<line x1="634.5" y1="932" x2="634.5" y2="938" stroke="#ddd" stroke-width="1.5"/>
<text x="634.5" y="955" font-size="15" fill="#e0e0e0" text-anchor="middle" font-weight="normal" >0,32</text>
<line x1="685.0" y1="932" x2="685.0" y2="938" stroke="#ddd" stroke-width="1.5"/>
<text x="685.0" y="955" font-size="15" fill="#e0e0e0" text-anchor="middle" font-weight="normal" >0,33</text>
<line x1="503.8" y1="931.4" x2="725" y2="778.8" stroke="#000" stroke-width="3.4"/>
<circle cx="702.8" cy="823.8" r="5.2" fill="#000"/>
<rect x="591" y="833" width="14" height="14" fill="#fff" stroke="#111" stroke-width="2"/>
<circle cx="600" cy="827" r="5" fill="#444" stroke="#222" stroke-width="1"/>
<circle cx="604" cy="826" r="5" fill="#555" stroke="#222" stroke-width="1"/>
<circle cx="607" cy="824" r="5" fill="#444" stroke="#222" stroke-width="1"/>
<circle cx="606" cy="830" r="5" fill="#777" stroke="#222" stroke-width="1"/>
<circle cx="609" cy="834" r="5" fill="#888" stroke="#222" stroke-width="1"/>
<circle cx="605" cy="832" r="5" fill="#999" stroke="#222" stroke-width="1"/>
<circle cx="607" cy="832" r="4.5" fill="#fff" stroke="#333" stroke-width="1"/>
<rect x="744.5" y="724" width="921" height="223.5" fill="#000"/>
<rect x="745.5" y="725" width="918" height="15" fill="#333"/>
<rect x="745.5" y="740" width="918" height="15" fill="#181818"/>
<text x="941.2" y="746.3" font-size="16" fill="#f0f0f0" text-anchor="middle" font-weight="normal" >0</text>
<text x="1010.1" y="746.3" font-size="16" fill="#f0f0f0" text-anchor="middle" font-weight="normal" >10</text>
<text x="1079.0" y="746.3" font-size="16" fill="#f0f0f0" text-anchor="middle" font-weight="normal" >20</text>
<text x="1147.9" y="746.3" font-size="16" fill="#f0f0f0" text-anchor="middle" font-weight="normal" >30</text>
<text x="1216.8000000000002" y="746.3" font-size="16" fill="#f0f0f0" text-anchor="middle" font-weight="normal" >40</text>
<text x="1285.7" y="746.3" font-size="16" fill="#f0f0f0" text-anchor="middle" font-weight="normal" >50</text>
<text x="1354.6000000000001" y="746.3" font-size="16" fill="#f0f0f0" text-anchor="middle" font-weight="normal" >60</text>
<text x="1423.5" y="746.3" font-size="16" fill="#f0f0f0" text-anchor="middle" font-weight="normal" >70</text>
<text x="1492.4" y="746.3" font-size="16" fill="#f0f0f0" text-anchor="middle" font-weight="normal" >80</text>
<text x="1561.3000000000002" y="746.3" font-size="16" fill="#f0f0f0" text-anchor="middle" font-weight="normal" >90</text>
<text x="1630.2" y="746.3" font-size="16" fill="#f0f0f0" text-anchor="middle" font-weight="normal" >100</text>
<rect x="745.5" y="755.0" width="918" height="27.5" fill="#474747"/>
<text x="758.5" y="775.2" font-size="16.5" fill="#f4f4f4" text-anchor="start" font-weight="bold" >x: CIE31</text>
<text x="911.3" y="775.0" font-size="16" fill="#f0f0f0" text-anchor="start" font-weight="normal" >0,33</text>
<text x="980.1999999999999" y="775.0" font-size="16" fill="#f0f0f0" text-anchor="start" font-weight="normal" >0,31</text>
<text x="1049.1" y="775.0" font-size="16" fill="#f0f0f0" text-anchor="start" font-weight="normal" >0,31</text>
<text x="1118.0" y="775.0" font-size="16" fill="#f0f0f0" text-anchor="start" font-weight="normal" >0,31</text>
<text x="1186.9" y="775.0" font-size="16" fill="#f0f0f0" text-anchor="start" font-weight="normal" >0,31</text>
<text x="1255.8" y="775.0" font-size="16" fill="#f0f0f0" text-anchor="start" font-weight="normal" >0,31</text>
<text x="1324.7" y="775.0" font-size="16" fill="#f0f0f0" text-anchor="start" font-weight="normal" >0,31</text>
<text x="1393.6" y="775.0" font-size="16" fill="#f0f0f0" text-anchor="start" font-weight="normal" >0,31</text>
<text x="1462.5" y="775.0" font-size="16" fill="#f0f0f0" text-anchor="start" font-weight="normal" >0,31</text>
<text x="1531.4" y="775.0" font-size="16" fill="#f0f0f0" text-anchor="start" font-weight="normal" >0,31</text>
<text x="1600.3" y="775.0" font-size="16" fill="#f0f0f0" text-anchor="start" font-weight="normal" >0,31</text>
<rect x="745.5" y="782.5" width="918" height="27.5" fill="#7f7f7f"/>
<text x="758.5" y="802.7" font-size="16.5" fill="#f4f4f4" text-anchor="start" font-weight="bold" >y: CIE31</text>
<text x="911.3" y="802.5" font-size="16" fill="#f0f0f0" text-anchor="start" font-weight="normal" >0,33</text>
<text x="980.1999999999999" y="802.5" font-size="16" fill="#f0f0f0" text-anchor="start" font-weight="normal" >0,33</text>
<text x="1049.1" y="802.5" font-size="16" fill="#f0f0f0" text-anchor="start" font-weight="normal" >0,33</text>
<text x="1118.0" y="802.5" font-size="16" fill="#f0f0f0" text-anchor="start" font-weight="normal" >0,33</text>
<text x="1186.9" y="802.5" font-size="16" fill="#f0f0f0" text-anchor="start" font-weight="normal" >0,33</text>
<text x="1255.8" y="802.5" font-size="16" fill="#f0f0f0" text-anchor="start" font-weight="normal" >0,33</text>
<text x="1324.7" y="802.5" font-size="16" fill="#f0f0f0" text-anchor="start" font-weight="normal" >0,33</text>
<text x="1393.6" y="802.5" font-size="16" fill="#f0f0f0" text-anchor="start" font-weight="normal" >0,33</text>
<text x="1462.5" y="802.5" font-size="16" fill="#f0f0f0" text-anchor="start" font-weight="normal" >0,33</text>
<text x="1531.4" y="802.5" font-size="16" fill="#f0f0f0" text-anchor="start" font-weight="normal" >0,33</text>
<text x="1600.3" y="802.5" font-size="16" fill="#f0f0f0" text-anchor="start" font-weight="normal" >0,33</text>
<rect x="745.5" y="810.0" width="918" height="27.5" fill="#474747"/>
<text x="758.5" y="830.2" font-size="16.5" fill="#f4f4f4" text-anchor="start" font-weight="bold" >Y</text>
<text x="911.3" y="830.0" font-size="16" fill="#f0f0f0" text-anchor="start" font-weight="normal" >0,00</text>
<text x="980.1999999999999" y="830.0" font-size="16" fill="#f0f0f0" text-anchor="start" font-weight="normal" >4,86</text>
<text x="1049.1" y="830.0" font-size="16" fill="#f0f0f0" text-anchor="start" font-weight="normal" >15,90</text>
<text x="1118.0" y="830.0" font-size="16" fill="#f0f0f0" text-anchor="start" font-weight="normal" >35,10</text>
<text x="1186.9" y="830.0" font-size="16" fill="#f0f0f0" text-anchor="start" font-weight="normal" >63,68</text>
<text x="1255.8" y="830.0" font-size="16" fill="#f0f0f0" text-anchor="start" font-weight="normal" >105,97</text>
<text x="1324.7" y="830.0" font-size="16" fill="#f0f0f0" text-anchor="start" font-weight="normal" >157,35</text>
<text x="1393.6" y="830.0" font-size="16" fill="#f0f0f0" text-anchor="start" font-weight="normal" >220,86</text>
<text x="1462.5" y="830.0" font-size="16" fill="#f0f0f0" text-anchor="start" font-weight="normal" >297,64</text>
<text x="1531.4" y="830.0" font-size="16" fill="#f0f0f0" text-anchor="start" font-weight="normal" >392,52</text>
<text x="1600.3" y="830.0" font-size="16" fill="#f0f0f0" text-anchor="start" font-weight="normal" >497,32</text>
<rect x="745.5" y="837.5" width="918" height="27.5" fill="#7f7f7f"/>
<text x="758.5" y="857.7" font-size="16.5" fill="#f4f4f4" text-anchor="start" font-weight="bold" >Target Y</text>
<text x="911.3" y="857.5" font-size="16" fill="#f0f0f0" text-anchor="start" font-weight="normal" >0,00</text>
<text x="980.1999999999999" y="857.5" font-size="16" fill="#f0f0f0" text-anchor="start" font-weight="normal" >5,14</text>
<text x="1049.1" y="857.5" font-size="16" fill="#f0f0f0" text-anchor="start" font-weight="normal" >16,46</text>
<text x="1118.0" y="857.5" font-size="16" fill="#f0f0f0" text-anchor="start" font-weight="normal" >35,94</text>
<text x="1186.9" y="857.5" font-size="16" fill="#f0f0f0" text-anchor="start" font-weight="normal" >66,08</text>
<text x="1255.8" y="857.5" font-size="16" fill="#f0f0f0" text-anchor="start" font-weight="normal" >107,35</text>
<text x="1324.7" y="857.5" font-size="16" fill="#f0f0f0" text-anchor="start" font-weight="normal" >158,42</text>
<text x="1393.6" y="857.5" font-size="16" fill="#f0f0f0" text-anchor="start" font-weight="normal" >221,41</text>
<text x="1462.5" y="857.5" font-size="16" fill="#f0f0f0" text-anchor="start" font-weight="normal" >300,29</text>
<text x="1531.4" y="857.5" font-size="16" fill="#f0f0f0" text-anchor="start" font-weight="normal" >393,53</text>
<text x="1600.3" y="857.5" font-size="16" fill="#f0f0f0" text-anchor="start" font-weight="normal" >497,32</text>
<rect x="745.5" y="865.0" width="918" height="27.5" fill="#474747"/>
<text x="758.5" y="885.2" font-size="16.5" fill="#f4f4f4" text-anchor="start" font-weight="bold" >Gamma Log/Log</text>
<text x="911.3" y="885.0" font-size="16" fill="#f0f0f0" text-anchor="start" font-weight="normal" >1,28</text>
<text x="980.1999999999999" y="885.0" font-size="16" fill="#f0f0f0" text-anchor="start" font-weight="normal" >2,03</text>
<text x="1049.1" y="885.0" font-size="16" fill="#f0f0f0" text-anchor="start" font-weight="normal" >2,14</text>
<text x="1118.0" y="885.0" font-size="16" fill="#f0f0f0" text-anchor="start" font-weight="normal" >2,19</text>
<text x="1186.9" y="885.0" font-size="16" fill="#f0f0f0" text-anchor="start" font-weight="normal" >2,24</text>
<text x="1255.8" y="885.0" font-size="16" fill="#f0f0f0" text-anchor="start" font-weight="normal" >2,24</text>
<text x="1324.7" y="885.0" font-size="16" fill="#f0f0f0" text-anchor="start" font-weight="normal" >2,25</text>
<text x="1393.6" y="885.0" font-size="16" fill="#f0f0f0" text-anchor="start" font-weight="normal" >2,26</text>
<text x="1462.5" y="885.0" font-size="16" fill="#f0f0f0" text-anchor="start" font-weight="normal" >2,30</text>
<text x="1531.4" y="885.0" font-size="16" fill="#f0f0f0" text-anchor="start" font-weight="normal" >2,29</text>
<text x="1600.3" y="885.0" font-size="16" fill="#f0f0f0" text-anchor="start" font-weight="normal" >2,27</text>
<rect x="745.5" y="892.5" width="918" height="27.5" fill="#7f7f7f"/>
<text x="758.5" y="912.7" font-size="16.5" fill="#f4f4f4" text-anchor="start" font-weight="bold" >CCT</text>
<text x="911.3" y="912.5" font-size="16" fill="#f0f0f0" text-anchor="start" font-weight="normal" >5456,00</text>
<text x="980.1999999999999" y="912.5" font-size="16" fill="#f0f0f0" text-anchor="start" font-weight="normal" >6443,00</text>
<text x="1049.1" y="912.5" font-size="16" fill="#f0f0f0" text-anchor="start" font-weight="normal" >6404,00</text>
<text x="1118.0" y="912.5" font-size="16" fill="#f0f0f0" text-anchor="start" font-weight="normal" >6383,00</text>
<text x="1186.9" y="912.5" font-size="16" fill="#f0f0f0" text-anchor="start" font-weight="normal" >6432,00</text>
<text x="1255.8" y="912.5" font-size="16" fill="#f0f0f0" text-anchor="start" font-weight="normal" >6434,00</text>
<text x="1324.7" y="912.5" font-size="16" fill="#f0f0f0" text-anchor="start" font-weight="normal" >6383,00</text>
<text x="1393.6" y="912.5" font-size="16" fill="#f0f0f0" text-anchor="start" font-weight="normal" >6391,00</text>
<text x="1462.5" y="912.5" font-size="16" fill="#f0f0f0" text-anchor="start" font-weight="normal" >6390,00</text>
<text x="1531.4" y="912.5" font-size="16" fill="#f0f0f0" text-anchor="start" font-weight="normal" >6389,00</text>
<text x="1600.3" y="912.5" font-size="16" fill="#f0f0f0" text-anchor="start" font-weight="normal" >6391,00</text>
<rect x="745.5" y="920.0" width="918" height="27.5" fill="#474747"/>
<text x="758.5" y="940.2" font-size="16.5" fill="#f4f4f4" text-anchor="start" font-weight="bold" >ΔE 2000</text>
<text x="911.3" y="940.0" font-size="16" fill="#f0f0f0" text-anchor="start" font-weight="normal" >0,00</text>
<text x="980.1999999999999" y="940.0" font-size="16" fill="#f0f0f0" text-anchor="start" font-weight="normal" >0,66</text>
<text x="1049.1" y="940.0" font-size="16" fill="#f0f0f0" text-anchor="start" font-weight="normal" >0,82</text>
<text x="1118.0" y="940.0" font-size="16" fill="#f0f0f0" text-anchor="start" font-weight="normal" >1,08</text>
<text x="1186.9" y="940.0" font-size="16" fill="#f0f0f0" text-anchor="start" font-weight="normal" >1,14</text>
<text x="1255.8" y="940.0" font-size="16" fill="#f0f0f0" text-anchor="start" font-weight="normal" >1,25</text>
<text x="1324.7" y="940.0" font-size="16" fill="#f0f0f0" text-anchor="start" font-weight="normal" >1,17</text>
<text x="1393.6" y="940.0" font-size="16" fill="#f0f0f0" text-anchor="start" font-weight="normal" >1,00</text>
<text x="1462.5" y="940.0" font-size="16" fill="#f0f0f0" text-anchor="start" font-weight="normal" >0,87</text>
<text x="1531.4" y="940.0" font-size="16" fill="#f0f0f0" text-anchor="start" font-weight="normal" >0,99</text>
<text x="1600.3" y="940.0" font-size="16" fill="#f0f0f0" text-anchor="start" font-weight="normal" >1,15</text></svg>
<div class="a logo"></div>
<svg class="a" style="left:0;top:26px" width="210" height="34">
<g transform="translate(38.9 15.85) rotate(45)" fill="#fff">
<path d="M-0.7,-8 H-6 a2,2 0 0 0 -2,2 V-0.7 M0.7,-8 H6 a2,2 0 0 1 2,2 V-0.7 M8,0.7 V6 a2,2 0 0 1 -2,2 H0.7 M-0.7,8 H-6 a2,2 0 0 1 -2,-2 V0.7" fill="none" stroke="#fff" stroke-width="3"/>
<rect x="-5.2" y="-5.2" width="4.5" height="4.5" rx="0.8"/><rect x="0.7" y="-5.2" width="4.5" height="4.5" rx="0.8"/>
<rect x="-5.2" y="0.7" width="4.5" height="4.5" rx="0.8"/><rect x="0.7" y="0.7" width="4.5" height="4.5" rx="0.8"/>
</g>
<path d="M67.74,10.85 A6.05,6.05 0 1 0 67.74,20.11 M84.25,15.48 A6.05,6.05 0 1 0 72.15,15.48 A6.05,6.05 0 1 0 84.25,15.48 M83.9,9.4 V23.2 M137.55,15.48 A6.05,6.05 0 1 0 125.45,15.48 A6.05,6.05 0 1 0 137.55,15.48 M137.0,9.4 V23.2 M90.5,2 V23.2 M97.95,9.4 V23.2 M97.95,14.88 A5.48,5.48 0 0 1 108.9,14.88 V23.2 M108.9,14.87 A5.47,5.47 0 0 1 119.85,14.87 V23.2 M142.05,9.4 V23.2 M142.05,14.05 A4.65,4.65 0 0 1 151.35,14.05 V23.2" fill="none" stroke="#fff" stroke-width="3.3"/>
<circle cx="187.5" cy="15.5" r="10.5" fill="#cc1a1e"/>
<circle cx="187.5" cy="15.5" r="8" fill="#d8262a"/>
<path d="M181.5,13 L193.5,13 L187.5,19.5 Z" fill="#fff"/>
</svg>
<div class="a rainbow"></div>
<!-- tabs -->
<div class="a" style="left:0;top:65px;width:31px;height:32px;border-radius:0 5px 5px 0;background:linear-gradient(#8c8c8c,#5a5a5a);border:1px solid #9a9a9a;border-left:none"></div>
<div class="a" style="left:3px;top:70px;width:22px;height:22px;border-radius:50%;background:radial-gradient(circle at 50% 40%,#6a6a6a,#777 70%,#808080)"></div>
<svg class="a" style="left:0;top:65px" width="31" height="32"><path d="M11.5,11 L18,16 L11.5,21 Z" fill="#fff"/></svg>
<div class="a" style="left:33px;top:65px;width:104px;height:34px;border-radius:5px 5px 0 0;background:linear-gradient(#3c3c3c,#2c2c2c);border:1px solid #555;border-bottom:none"></div>
<div class="a" style="left:99px;top:66px;width:1px;height:33px;background:#555"></div>
<div class="a" style="left:40px;top:75px;font-size:14px;color:#ddd;white-space:nowrap">History 1</div>
<div class="a" style="left:106px;top:74px;width:21px;height:21px;border-radius:50%;background:radial-gradient(circle at 50% 40%,#2c2c2c,#353535 70%,#3a3a3a)"></div>
<svg class="a" style="left:106px;top:74px" width="21" height="21"><path d="M10.5,6 V16 M5.5,11 H15.5" stroke="#777" stroke-width="1.2"/></svg>
<!-- device boxes -->
<div class="a dev" style="left:1285px;width:161px"><div class="strip"></div>
<div class="t" style="left:10px;top:3px">X-Rite i1Pro 2</div>
<div class="t" style="left:10px;top:19px">Direct View</div>
<div class="dd" style="left:88px;top:6px"></div>
<div style="position:absolute;left:121px;top:3px;width:1px;height:31px;background:#3a3a3a"></div>
<div style="position:absolute;left:129px;top:3px;width:29px;height:29px;border-radius:50%;background:#0000dc;border:1.5px solid #dde;color:#fff;font-size:11px;text-align:center;line-height:26px">237</div>
</div>
<div class="a dev" style="left:1453px;width:236px"><div class="strip"></div>
<div class="t" style="left:10px;top:3px">CalMAN Client 3 Pattern Generator</div>
<div class="dd" style="left:206px;top:6px"></div>
</div>
<div class="a dev" style="left:1696px;width:162px"><div class="strip" style="background:#e8e010;width:6px"></div>
<div class="t" style="left:9px;top:3px">Direct Display Control</div>
<div class="dd" style="left:132px;top:6px"></div>
</div>
<div class="a" style="left:1861px;top:65px;width:38px;height:32px;border-radius:5px;background:linear-gradient(#8e8e8e,#5e5e5e);border:1.5px solid #b4b4b4"></div>
<div class="a" style="left:1870px;top:71px;width:20px;height:21px;border-radius:50%;background:linear-gradient(#5e5e5e,#8a8a8a)"></div>
<svg class="a" style="left:1861px;top:65px" width="38" height="32" viewBox="0 0 38 32">
<g transform="translate(19 16)" fill="#e0e0e0">
<circle r="4.6" fill="none" stroke="#e0e0e0" stroke-width="2.2"/>
<g><rect x="-1.2" y="-7.4" width="2.4" height="3.5"/><rect x="-1.2" y="3.9" width="2.4" height="3.5"/><rect x="-7.4" y="-1.2" width="3.5" height="2.4"/><rect x="3.9" y="-1.2" width="3.5" height="2.4"/></g>
<g transform="rotate(45)"><rect x="-1.2" y="-7.4" width="2.4" height="3.5"/><rect x="-1.2" y="3.9" width="2.4" height="3.5"/><rect x="-7.4" y="-1.2" width="3.5" height="2.4"/><rect x="3.9" y="-1.2" width="3.5" height="2.4"/></g>
</g></svg>
<div class="a" style="left:1900px;top:65px;width:30px;height:32px;border-radius:5px;background:linear-gradient(#8e8e8e,#5e5e5e);border:1.5px solid #b4b4b4"></div>
<div class="a" style="left:1904px;top:71px;width:21px;height:21px;border-radius:50%;background:linear-gradient(#5e5e5e,#8a8a8a)"></div>
<svg class="a" style="left:1900px;top:65px" width="20" height="32"><path d="M18.5,9.5 L12,16 L18.5,21 Z" fill="#fff"/></svg>
<div class="a btm" style="left:1.0px"><div class="sw" style="background:rgb(0,0,0)"></div><div class="lb">0</div></div>
<div class="a btm" style="left:143.1px"><div class="sw" style="background:rgb(28,28,28)"></div><div class="lb">10</div></div>
<div class="a btm" style="left:285.2px"><div class="sw" style="background:rgb(51,51,51)"></div><div class="lb">20</div></div>
<div class="a btm" style="left:427.3px"><div class="sw" style="background:rgb(77,77,77)"></div><div class="lb">30</div></div>
<div class="a btm" style="left:569.4px"><div class="sw" style="background:rgb(102,102,102)"></div><div class="lb">40</div></div>
<div class="a btm" style="left:711.5px"><div class="sw" style="background:rgb(128,128,128)"></div><div class="lb">50</div></div>
<div class="a btm" style="left:853.6px"><div class="sw" style="background:rgb(153,153,153)"></div><div class="lb">60</div></div>
<div class="a btm" style="left:995.7px"><div class="sw" style="background:rgb(179,179,179)"></div><div class="lb">70</div></div>
<div class="a btm" style="left:1137.8px"><div class="sw" style="background:rgb(204,204,204)"></div><div class="lb">80</div></div>
<div class="a btm" style="left:1279.9px"><div class="sw" style="background:rgb(230,230,230)"></div><div class="lb">90</div></div>
<div class="a" style="left:1422px;top:970px;width:139px;height:70px;border-radius:5px 5px 0 0;background:#262626"></div>
<div class="a" style="left:1427px;top:975px;width:129px;height:41px;border-radius:5px;background:#fff"></div>
<div class="a" style="left:1422px;top:1023px;width:139px;text-align:center;font-size:12.5px;font-weight:bold;color:#fff">100</div>
<div class="a" style="left:1564px;top:970px;width:55px;height:20px;border-radius:5px 5px 0 0;background:linear-gradient(#a8a8a8,#8a8a8a)"></div>
<div class="a" style="left:1564px;top:991px;width:55px;height:49px;background:linear-gradient(#9a9a9a,#7c7c7c)"></div>
<div class="a" style="left:1583px;top:972px;width:17px;height:17px;border-radius:50%;background:radial-gradient(circle at 50% 40%,#7a7a7a,#8c8c8c 70%,#999)"></div>
<svg class="a" style="left:1564px;top:970px" width="55" height="70"><path d="M21.5,11.5 L27.5,5.5 L33.5,11.5 Z" fill="#333"/><rect x="11.5" y="28.5" width="32.5" height="33" rx="5" fill="#a4a4a4" stroke="#1a1a1a" stroke-width="3"/><rect x="20" y="37.5" width="15.5" height="15.5" fill="#111"/></svg>
<div class="a tb" style="left:1620px;width:53px"><div class="c"></div></div>
<div class="a tb" style="left:1673px;width:51px"><div class="c"></div></div>
<div class="a tb" style="left:1724px;width:50px"><div class="c"></div></div>
<div class="a tb" style="left:1774px;width:51px"><div class="c"></div></div>
<div class="a tb" style="left:1825px;width:51px"><div class="c"></div></div>
<div class="a" style="left:1876px;top:970px;width:44px;height:33.5px;background:linear-gradient(#2a2a2a,#1e1e1e)"></div>
<div class="a" style="left:1887px;top:975px;width:24px;height:24px;border-radius:50%;background:radial-gradient(circle at 50% 40%,#222,#2c2c2c 70%,#333)"></div>
<svg class="a" style="left:1620px;top:970px" width="300" height="34"><rect x="21.5" y="12.5" width="9.5" height="9.5" fill="#333"/><path d="M74,12.5 L84,17.5 L74,22.5 Z" fill="#333"/><path d="M126,11 H123 V24 H126 M134,11 H137 V24 H134" fill="none" stroke="#333" stroke-width="2"/><circle cx="128.5" cy="17.5" r="1" fill="#333"/><circle cx="131.5" cy="17.5" r="1" fill="#333"/><path d="M180,17 c-2.6,-3.5 -7,-3.5 -7,0 c0,3.5 4.4,3.5 7,0 c2.6,-3.5 7,-3.5 7,0 c0,3.5 -4.4,3.5 -7,0" fill="none" stroke="#333" stroke-width="2"/><path d="M224,15 a6,6 0 0 1 11,-1 M236,20 a6,6 0 0 1 -11,1" fill="none" stroke="#333" stroke-width="2.6"/><path d="M237,10 L237,16 L231,15 Z M223,25 L223,19 L229,20 Z" fill="#333"/></svg>
<div class="a" style="left:1620px;top:1005px;width:154px;height:34px;border-radius:5px 0 0 0;background:linear-gradient(#b4b4b4,#9a9a9a 50%,#888)"></div>
<div class="a" style="left:1775px;top:1005px;width:145px;height:34px;background:linear-gradient(#b4b4b4,#9a9a9a 50%,#888)"></div>
<div class="a" style="left:1643px;top:1011px;width:22px;height:22px;border-radius:50%;background:radial-gradient(circle at 50% 40%,#8a8a8a,#9c9c9c 70%,#a6a6a6)"></div>
<div class="a" style="left:1885px;top:1011px;width:22px;height:22px;border-radius:50%;background:radial-gradient(circle at 50% 40%,#8a8a8a,#9c9c9c 70%,#a6a6a6)"></div>
<svg class="a" style="left:1620px;top:1005px" width="300" height="34"><text x="65" y="25.5" font-family="Liberation Sans" font-size="24" font-weight="bold" fill="#333" textLength="57" lengthAdjust="spacingAndGlyphs">Back</text><text x="186" y="25.5" font-family="Liberation Sans" font-size="24" font-weight="bold" fill="#333" textLength="57.5" lengthAdjust="spacingAndGlyphs">Next</text><path d="M36,11 L31,17 L36,23 M41,11 L36,17 L41,23" fill="none" stroke="#333" stroke-width="2"/><path d="M272,11 L277,17 L272,23 M277,11 L282,17 L277,23" fill="none" stroke="#333" stroke-width="2"/></svg>
</body></html>
